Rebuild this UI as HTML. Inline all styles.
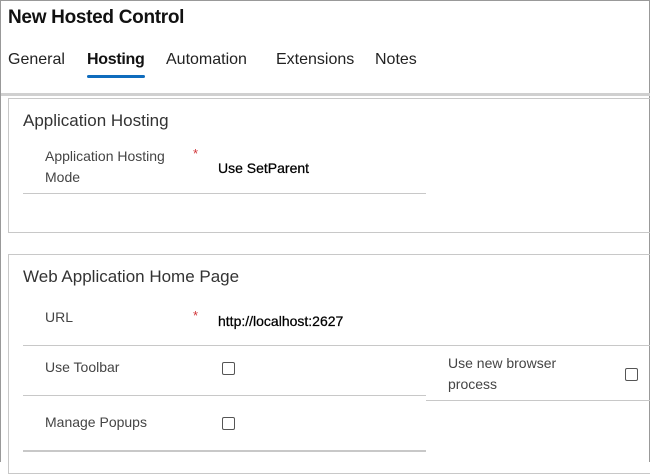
<!DOCTYPE html>
<html><head><style>
*{margin:0;padding:0;box-sizing:border-box}
body{width:650px;height:462px;overflow:hidden;background:#fff;font-family:"Liberation Sans",sans-serif;position:relative;color:#222}
.a{position:absolute;white-space:nowrap}
.hl{position:absolute;height:1px;background:#c8c8c8}
.lbl{font-size:14px;color:#444}
.val{font-size:14px;color:#000;-webkit-text-stroke:0.25px #000}
.star{color:#d13438;font-size:13px}
.cb{position:absolute;width:13px;height:13px;border:1px solid #555;border-radius:2px;background:#fff}
</style></head><body>
<div style="position:absolute;left:0;top:0;width:650px;height:462px;border-left:1px solid #999;border-top:1px solid #999;border-right:1px solid #999"></div>
<div class="a" style="left:8px;top:7px;font-size:19px;font-weight:bold;color:#111;letter-spacing:-0.3px">New Hosted Control</div>
<div class="a" style="left:8px;top:51px;font-size:16px;color:#222">General</div>
<div class="a" style="left:87px;top:51px;font-size:16px;color:#111;font-weight:bold;letter-spacing:-0.3px">Hosting</div>
<div style="position:absolute;left:87px;top:75px;width:58px;height:3px;background:#0f6cbd;border-radius:2px"></div>
<div class="a" style="left:166px;top:51px;font-size:16px">Automation</div>
<div class="a" style="left:276px;top:51px;font-size:16px">Extensions</div>
<div class="a" style="left:375px;top:51px;font-size:16px">Notes</div>
<div style="position:absolute;left:1px;top:93px;width:649px;height:3px;background:#d0d0d0"></div>
<div style="position:absolute;left:8px;top:98px;width:650px;height:135px;border:1px solid #c8c8c8;border-right:none"></div>
<div class="a" style="left:23px;top:111px;font-size:17px;color:#333">Application Hosting</div>
<div class="a lbl" style="left:45px;top:146px;line-height:21px">Application Hosting<br>Mode</div>
<div class="a star" style="left:193px;top:146px">*</div>
<div class="a val" style="left:218px;top:160px">Use SetParent</div>
<div class="hl" style="left:23px;top:193px;width:403px"></div>
<div style="position:absolute;left:8px;top:254px;width:650px;height:220px;border:1px solid #c8c8c8;border-right:none"></div>
<div class="a" style="left:23px;top:267px;font-size:17px;color:#333">Web Application Home Page</div>
<div class="a lbl" style="left:45px;top:309px">URL</div>
<div class="a star" style="left:193px;top:308px">*</div>
<div class="a val" style="left:218px;top:313px">http://localhost:2627</div>
<div class="hl" style="left:23px;top:345px;width:627px"></div>
<div class="a lbl" style="left:45px;top:359px">Use Toolbar</div>
<div class="cb" style="left:222px;top:362px"></div>
<div class="a lbl" style="left:448px;top:353px;line-height:21px">Use new browser<br>process</div>
<div class="cb" style="left:625px;top:368px"></div>
<div class="hl" style="left:23px;top:395px;width:403px"></div>
<div class="hl" style="left:426px;top:400px;width:224px"></div>
<div class="a lbl" style="left:45px;top:414px">Manage Popups</div>
<div class="cb" style="left:222px;top:417px"></div>
<div class="hl" style="left:23px;top:450px;width:403px;height:2px"></div>
</body></html>
